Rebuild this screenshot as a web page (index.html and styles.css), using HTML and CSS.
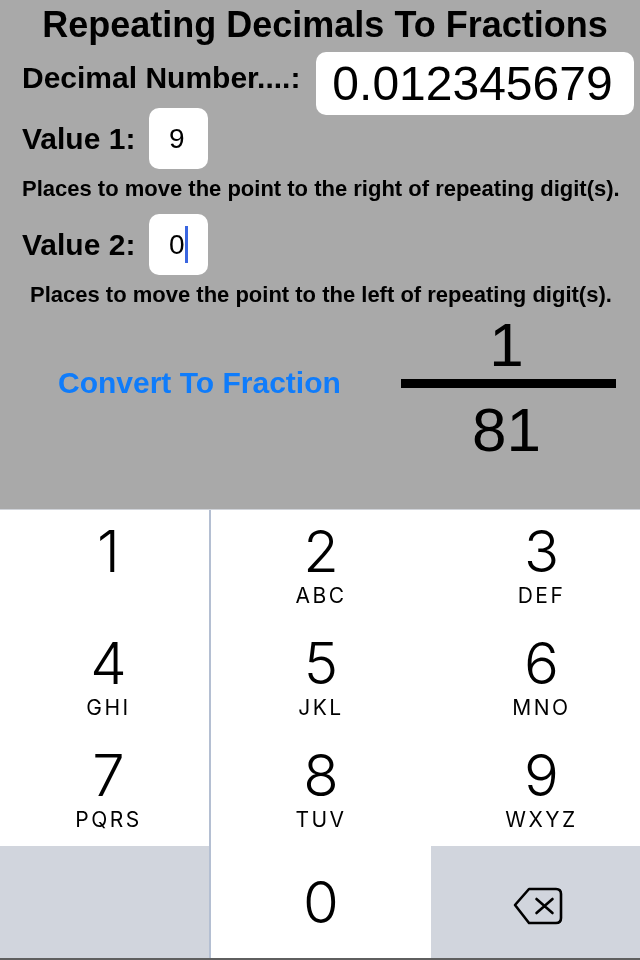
FILE: index.html
```html
<!DOCTYPE html>
<html lang="en">
<head>
  <meta charset="UTF-8" />
  <meta name="viewport" content="width=device-width, initial-scale=1" />
  <title>Repeating Decimals To Fractions</title>
  <link rel="stylesheet" href="styles.css">
</head>
<body>
  <div class="screen">
    <div class="form">
      <h1 class="title">Repeating Decimals To Fractions</h1>

      <div class="decimal-row">
        <span class="label">Decimal Number....:</span>
        <div class="field field-large">0.012345679</div>
      </div>

      <div class="value-row">
        <span class="label label-value">Value 1:</span>
        <div class="field field-small">9</div>
      </div>
      <p class="hint">Places to move the point to the right of repeating digit(s).</p>

      <div class="value-row">
        <span class="label label-value">Value 2:</span>
        <div class="field field-small">0<span class="caret"></span></div>
      </div>
      <p class="hint hint-left">Places to move the point to the left of repeating digit(s).</p>

      <div class="result-row">
        <span class="convert">Convert To Fraction</span>
        <div class="fraction">
          <span class="numerator">1</span>
          <span class="fraction-bar"></span>
          <span class="denominator">81</span>
        </div>
      </div>
    </div>

    <div class="keypad">
      <div class="key key-left"><span class="digit">1</span></div>
      <div class="key"><span class="digit">2</span><span class="letters">ABC</span></div>
      <div class="key key-right"><span class="digit">3</span><span class="letters">DEF</span></div>
      <div class="key key-left"><span class="digit">4</span><span class="letters">GHI</span></div>
      <div class="key"><span class="digit">5</span><span class="letters">JKL</span></div>
      <div class="key key-right"><span class="digit">6</span><span class="letters">MNO</span></div>
      <div class="key key-left"><span class="digit">7</span><span class="letters">PQRS</span></div>
      <div class="key"><span class="digit">8</span><span class="letters">TUV</span></div>
      <div class="key key-right"><span class="digit">9</span><span class="letters">WXYZ</span></div>
      <div class="key key-left key-gray"></div>
      <div class="key"><span class="digit digit-zero">0</span></div>
      <div class="key key-gray key-delete">
        <svg class="delete-icon" width="50" height="40" viewBox="0 0 50 40" fill="none" stroke="#000" stroke-width="2.6" stroke-linejoin="round" stroke-linecap="round">
          <path d="M2 19 L16 3 H43 Q48 3 48 8 V32 Q48 37 43 37 H16 Z" />
          <path d="M23.5 13 L39.5 27 M39.5 13 L23.5 27" />
        </svg>
      </div>
    </div>
  </div>
</body>
</html>
```

FILE: styles.css
```css
html, body {
  margin: 0;
  padding: 0;
}
body {
  font-family: "Liberation Sans", Arial, sans-serif;
  color: #000;
}
.screen {
  width: 640px;
  height: 960px;
  overflow: hidden;
  background: #5f5f5f;
  filter: blur(0.5px);
}
.form {
  height: 510px;
  box-sizing: border-box;
  background: #a9a9a9;
  border-bottom: 1px solid #d0d3d9;
  padding: 0 6px 0 22px;
}
.title {
  margin: 0 0 0 -17px;
  width: 640px;
  height: 52px;
  line-height: 50px;
  font-size: 36px;
  font-weight: bold;
  text-align: center;
}
.label {
  font-size: 30px;
  font-weight: bold;
}
.decimal-row {
  display: flex;
  justify-content: space-between;
  align-items: flex-start;
  height: 56px;
}
.decimal-row .label {
  line-height: 52px;
}
.field {
  background: #fff;
  border-radius: 10px;
  display: flex;
  align-items: center;
}
.field-large {
  width: 318px;
  height: 63px;
  box-sizing: border-box;
  padding-right: 5px;
  justify-content: center;
  font-size: 48px;
}
.value-row {
  display: flex;
  align-items: center;
  height: 61px;
}
.label-value {
  width: 127px;
}
.field-small {
  width: 59px;
  height: 61px;
  padding-left: 20px;
  box-sizing: border-box;
  font-size: 28px;
}
.caret {
  width: 3px;
  height: 37px;
  background: #3a66e0;
}
.hint {
  margin: 0;
  height: 45px;
  line-height: 40px;
  font-size: 22px;
  font-weight: bold;
  white-space: nowrap;
}
.hint-left {
  margin-left: 8px;
  height: 40px;
}
.result-row {
  display: flex;
  align-items: flex-start;
  justify-content: space-between;
}
.convert {
  margin: 51px 0 0 36px;
  font-size: 30px;
  font-weight: bold;
  color: #0f7cfb;
}
.fraction {
  width: 215px;
  margin-right: 18px;
  display: flex;
  flex-direction: column;
  align-items: center;
  font-size: 62px;
  line-height: 60px;
}
.numerator,
.denominator {
  margin-right: 4px;
}
.fraction-bar {
  width: 100%;
  height: 9px;
  margin: 4px 0 12px;
  background: #000;
}
.keypad {
  height: 448px;
  display: grid;
  grid-template-columns: 211px 220px 209px;
  grid-template-rows: repeat(4, 112px);
  background: #fff;
}
.key {
  display: flex;
  flex-direction: column;
  align-items: center;
  background: #fff;
}
.key-left {
  border-right: 2px solid #b4bfd2;
  padding-left: 8px;
}
.key-right {
  padding-left: 12px;
}
.key-gray {
  background: #d1d5dd;
}
.digit {
  margin-top: 12px;
  font-family: Inter, "Liberation Sans", sans-serif;
  font-size: 58px;
  font-weight: 300;
  line-height: 58px;
}
.digit-zero {
  margin-top: 27px;
}
.letters {
  margin-top: 4px;
  font-family: Inter, "Liberation Sans", sans-serif;
  font-size: 21px;
  line-height: 24px;
  letter-spacing: 2.5px;
}
.key-delete {
  justify-content: center;
  padding-left: 0;
}
.delete-icon {
  margin: 8px 0 0 5px;
}
```
